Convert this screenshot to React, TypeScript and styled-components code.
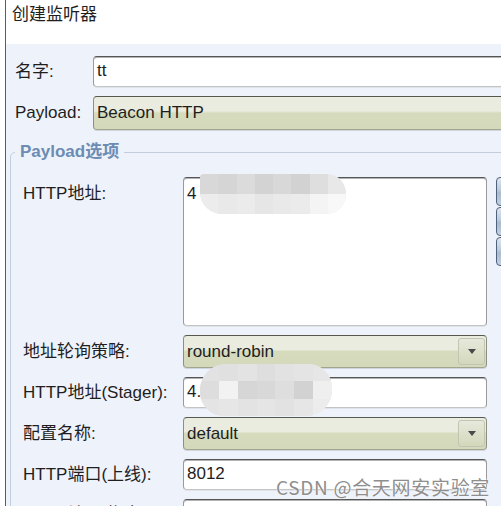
import React from "react";
import styled, { createGlobalStyle } from "styled-components";

const Global = createGlobalStyle`
  html, body { margin: 0; padding: 0; background: #fff; overflow: hidden; }
  body {
    width: 501px; height: 506px;
    font-family: "Liberation Sans", "Noto Sans CJK SC", sans-serif;
    color: #1e1e1e;
  }
  * { box-sizing: border-box; }
`;

const Page = styled.div`
  position: relative;
  width: 501px;
  height: 506px;
  overflow: hidden;
  padding-left: 5px;
`;

const Window = styled.div`
  width: 620px;
  height: 506px;
  border-left: 1px solid #5c5c5c;
  display: flex;
  flex-direction: column;
`;

const TitleBar = styled.div`
  height: 44px;
  flex: none;
  background: #fff;
  padding: 2px 0 0 6px;
  font-family: "Noto Sans CJK SC", sans-serif;
  font-size: 17px;
  line-height: 22px;
  color: #1e1e1e;
`;

const Content = styled.div`
  flex: 1;
  background: #eef2fa;
  padding: 12px 0 0 4px;
`;

const TopRow = styled.div<{ $h: number; $mt?: number }>`
  display: grid;
  grid-template-columns: 78px 1fr;
  align-items: center;
  padding-left: 5px;
  height: ${(p) => p.$h}px;
  margin-top: ${(p) => p.$mt ?? 0}px;
`;

const Label = styled.div<{ $top?: boolean }>`
  font-size: 17px;
  line-height: 20px;
  color: #1e1e1e;
  white-space: nowrap;
  align-self: ${(p) => (p.$top ? "start" : "center")};
  padding-top: ${(p) => (p.$top ? "7px" : "0")};
`;

const TextInput = styled.div`
  position: relative;
  height: 100%;
  display: flex;
  align-items: center;
  padding: 0 4px 1px 3px;
  background: #fff;
  border: 1px solid #9a9a9a;
  border-top-color: #555;
  border-bottom-color: #c4c4c4;
  border-radius: 4px;
  box-shadow: inset 0 1px 0 #b4b4b4, 0 1px 0 #dfe3ea;
  font-size: 17px;
  line-height: 20px;
  white-space: nowrap;
`;

const Combo = styled.div`
  height: 100%;
  display: flex;
  align-items: center;
  border: 1px solid #8e907f;
  border-top-color: #56584f;
  border-bottom-color: #a3a68f;
  border-radius: 4px;
  background: linear-gradient(
    #e9ecde 0%,
    #e9ecde 44%,
    #d6dbbe 50%,
    #d4d9bb 100%
  );
  box-shadow: 0 1px 0 #cfd5df;
  font-size: 17px;
  line-height: 20px;
`;

const ComboText = styled.div`
  flex: 1;
  padding-left: 3px;
  white-space: nowrap;
  overflow: hidden;
`;

const ArrowBox = styled.div`
  flex: none;
  width: 27px;
  align-self: stretch;
  margin: 2px 1px 2px 0;
  border: 1px solid #c2c5b2;
  border-radius: 3px;
  background: linear-gradient(#e6e9dc, #dde1cb 50%, #d3d8bb);
  display: flex;
  align-items: center;
  justify-content: center;
  &::after {
    content: "";
    width: 0;
    height: 0;
    border-left: 4px solid transparent;
    border-right: 4px solid transparent;
    border-top: 5px solid #4a4a4a;
  }
`;

const Group = styled.fieldset`
  margin: 12px 0 0 0;
  padding: 15px 0 10px 12px;
  border: 1px solid #c3cddb;
  border-radius: 5px;
  min-width: 0;
`;

const Legend = styled.legend`
  margin-left: -8px;
  padding: 0 5px;
  font-size: 17px;
  line-height: 20px;
  font-weight: bold;
  color: #6d8cb4;
`;

const Grid = styled.div`
  display: grid;
  grid-template-columns: 151px 304px 40px;
  grid-template-rows: 149px 33px 31px 33px 31px 31px;
  column-gap: 9px;
  row-gap: 9px;
`;

const Area = styled.div`
  position: relative;
  background: #fff;
  border: 1px solid #9a9a9a;
  border-top-color: #555;
  border-bottom-color: #c4c4c4;
  border-radius: 4px;
  box-shadow: inset 0 1px 0 #b4b4b4, 0 1px 0 #dfe3ea;
  padding: 6px 3px;
  font-size: 17px;
  line-height: 20px;
`;

const SideButtons = styled.div`
  display: flex;
  flex-direction: column;
  gap: 1px;
`;

const SideButton = styled.div`
  height: 29px;
  width: 30px;
  border: 1px solid #50627a;
  border-radius: 4px;
  background: linear-gradient(#dfe7f1 0%, #bccbdc 45%, #a9bbd0 55%, #c3d1e1 100%);
`;

const Mosaic = styled.div<{ $l: number; $t: number; $w: number; $h: number; $r: string }>`
  position: absolute;
  left: ${(p) => p.$l}px;
  top: ${(p) => p.$t}px;
  width: ${(p) => p.$w}px;
  height: ${(p) => p.$h}px;
  border-radius: ${(p) => p.$r};
  overflow: hidden;
  display: grid;
  background: #e6e6e6;
  filter: blur(0.6px);
`;

const Tile = styled.div``;

const Watermark = styled.div`
  position: absolute;
  left: 276px;
  top: 476px;
  font-family: "Noto Sans CJK SC", sans-serif;
  font-size: 19px;
  line-height: 22px;
  color: #8e8e8e;
  white-space: nowrap;
  text-shadow: 0 0 1px #fff, 0 0 2px #fff;
  letter-spacing: 0.7px;
`;

const topTiles = ["#d8d8d8", "#d5d5d5", "#dbdbdb", "#d3d3d3", "#d8d8d8", "#d2d2d2", "#dedede", "#e8e8e8"];
const botTiles = ["#ececec", "#e9e9e9", "#ebebeb", "#e6e6e6", "#e9e9e9", "#ebebeb", "#f4f4f4", "#f8f8f8"];

const stagerTop = ["#e2e2e2", "#e0e0e0", "#e3e3e3", "#dedede", "#e2e2e2", "#e4e4e4", "#e6e6e6"];
const stagerMid = ["#dddddd", "#f2f2f2", "#d6d6d6", "#d8d8d8", "#dedede", "#d2d2d2", "#efefef"];
const stagerBot = ["#e4e4e4", "#e6e6e6", "#e3e3e3", "#e5e5e5", "#e2e2e2", "#e6e6e6", "#ececec"];

export default function App() {
  return (
    <>
      <Global />
      <Page>
        <Window>
          <TitleBar>创建监听器</TitleBar>
          <Content>
            <TopRow $h={31}>
              <Label>名字:</Label>
              <TextInput>tt</TextInput>
            </TopRow>
            <TopRow $h={34} $mt={9}>
              <Label>Payload:</Label>
              <Combo>
                <ComboText>Beacon HTTP</ComboText>
              </Combo>
            </TopRow>
            <Group>
              <Legend>Payload选项</Legend>
              <Grid>
                <Label $top>HTTP地址:</Label>
                <Area>
                  4
                  <Mosaic
                    $l={16}
                    $t={-4}
                    $w={146}
                    $h={40}
                    $r="4px 20px 20px 22px"
                    style={{ gridTemplateColumns: "repeat(8, 1fr)", gridTemplateRows: "1fr 1fr" }}
                  >
                    {topTiles.map((c, i) => (
                      <Tile key={"t" + i} style={{ background: c }} />
                    ))}
                    {botTiles.map((c, i) => (
                      <Tile key={"b" + i} style={{ background: c }} />
                    ))}
                  </Mosaic>
                </Area>
                <SideButtons>
                  <SideButton />
                  <SideButton />
                  <SideButton />
                </SideButtons>

                <Label>地址轮询策略:</Label>
                <Combo>
                  <ComboText>round-robin</ComboText>
                  <ArrowBox />
                </Combo>
                <div />

                <Label>HTTP地址(Stager):</Label>
                <TextInput>
                  4.
                  <Mosaic
                    $l={16}
                    $t={-14}
                    $w={132}
                    $h={52}
                    $r="26px 24px 26px 24px"
                    style={{ gridTemplateColumns: "repeat(7, 1fr)", gridTemplateRows: "1fr 1fr 1fr" }}
                  >
                    {stagerTop.map((c, i) => (
                      <Tile key={"a" + i} style={{ background: c }} />
                    ))}
                    {stagerMid.map((c, i) => (
                      <Tile key={"m" + i} style={{ background: c }} />
                    ))}
                    {stagerBot.map((c, i) => (
                      <Tile key={"z" + i} style={{ background: c }} />
                    ))}
                  </Mosaic>
                </TextInput>
                <div />

                <Label>配置名称:</Label>
                <Combo>
                  <ComboText>default</ComboText>
                  <ArrowBox />
                </Combo>
                <div />

                <Label>HTTP端口(上线):</Label>
                <TextInput>8012</TextInput>
                <div />

                <Label>HTTP端口(绑定):</Label>
                <TextInput />
                <div />
              </Grid>
            </Group>
          </Content>
        </Window>
        <Watermark>CSDN @合天网安实验室</Watermark>
      </Page>
    </>
  );
}
